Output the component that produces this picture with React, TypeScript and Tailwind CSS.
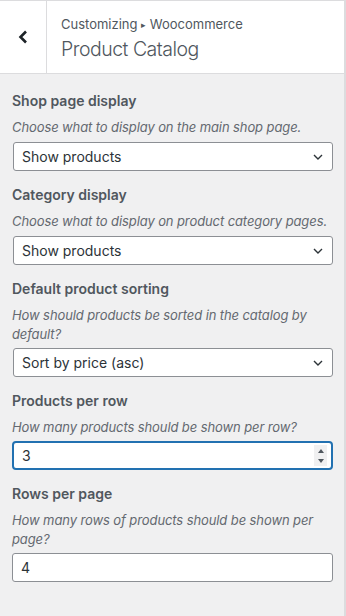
import React from 'react';

const font = { fontFamily: 'Inter, "Noto Sans", sans-serif' };

function Chevron() {
  return (
    <svg width="10" height="6" viewBox="0 0 10 6" className="absolute right-[10px] top-1/2 -translate-y-1/2 pointer-events-none">
      <path d="M1 1l4 4 4-4" fill="none" stroke="#2c3338" strokeWidth="1.4" />
    </svg>
  );
}

function SelectBox({ value }: { value: string }) {
  return (
    <div className="relative mt-[5px] ml-[1px]">
      <div className="h-[29px] w-full rounded-[3px] border border-[#8c8f94] bg-white pl-[8px] flex items-center text-[14px] text-[#2c3338]">
        {value}
      </div>
      <Chevron />
    </div>
  );
}

function Field({ label, desc, children }: { label: string; desc: string; children: React.ReactNode }) {
  return (
    <div className="mb-[12px]">
      <div className="text-[14px] font-semibold leading-[24px] text-[#50575e]">{label}</div>
      <div className="text-[13px] italic leading-[19px] tracking-[-0.1px] text-[#646970] mt-[5px]">{desc}</div>
      {children}
    </div>
  );
}

export default function App() {
  return (
    <div className="w-[346px] h-[616px] bg-[#f0f0f1] border-r-2 border-[#dcdcde] overflow-hidden" style={font}>
      {/* Header */}
      <div className="flex h-[74px] bg-white border-t border-b border-[#dcdcde]">
        <div className="w-[47px] flex items-center justify-center border-r border-[#dcdcde]">
          <svg width="10" height="14" viewBox="0 0 10 14">
            <path d="M8 1.5L2.5 7 8 12.5" fill="none" stroke="#1d2327" strokeWidth="2.6" />
          </svg>
        </div>
        <div className="pl-[14px] pt-[14px]">
          <div className="text-[13px] leading-[18px] text-[#50575e]">Customizing <span className="text-[9px] align-[1px]">▸</span> Woocommerce</div>
          <div className="text-[19.5px] font-light leading-[30px] tracking-[-0.5px] text-[#50575e]">Product Catalog</div>
        </div>
      </div>

      {/* Controls */}
      <div className="pl-[12px] pr-[11px] pt-[15px]">
        <Field label="Shop page display" desc="Choose what to display on the main shop page.">
          <SelectBox value="Show products" />
        </Field>
        <Field label="Category display" desc="Choose what to display on product category pages.">
          <SelectBox value="Show products" />
        </Field>
        <Field label="Default product sorting" desc="How should products be sorted in the catalog by default?">
          <div className="-mt-[1px]">
            <SelectBox value="Sort by price (asc)" />
          </div>
        </Field>
        <Field label="Products per row" desc="How many products should be shown per row?">
          <div className="relative mt-[4px]">
            <div className="h-[29px] w-full rounded-[4px] border-2 border-[#2271b1] bg-white pl-[8px] flex items-center text-[14px] text-[#2c3338]">
              3
            </div>
            <div className="absolute right-[6px] top-[4px] bottom-[4px] w-[13px] bg-[#f0f0f1] flex flex-col items-center justify-center gap-[6px]">
              <div className="w-0 h-0 border-l-[3.5px] border-r-[3.5px] border-b-[4px] border-l-transparent border-r-transparent border-b-[#50575e]" />
              <div className="w-0 h-0 border-l-[3.5px] border-r-[3.5px] border-t-[4px] border-l-transparent border-r-transparent border-t-[#50575e]" />
            </div>
          </div>
        </Field>
        <Field label="Rows per page" desc="How many rows of products should be shown per page?">
          <div className="mt-[4px] h-[29px] w-full rounded-[3px] border border-[#8c8f94] bg-white pl-[8px] flex items-center text-[14px] text-[#2c3338]">
            4
          </div>
        </Field>
      </div>
    </div>
  );
}
